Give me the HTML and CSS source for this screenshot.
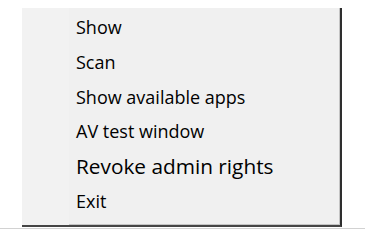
FILE: index.html
```html
<!DOCTYPE html>
<html lang="en">
<head>
  <meta charset="UTF-8" />
  <title>Tray menu</title>
  <link rel="stylesheet" href="styles.css">
</head>
<body>

<div class="menu">
  <div class="gutter"></div>
  <ul class="items">
    <li class="item">Show</li>
    <li class="item">Scan</li>
    <li class="item">Show available apps</li>
    <li class="item">AV test window</li>
    <li class="item big">Revoke admin rights</li>
    <li class="item">Exit</li>
  </ul>
</div>
<div class="rule"></div>

</body>
</html>
```

FILE: styles.css
```css
:root {
  --menu-bg: #f0f0f0;
  --gutter: #f2f2f2;
  --text: #000000;
}

* {
  box-sizing: border-box;
}

body {
  margin: 0;
  background: #ffffff;
  font-family: 'Open Sans', 'Noto Sans', sans-serif;
  width: 365px;
  height: 241px;
  overflow: hidden;
}

.menu {
  display: flex;
  margin: 8px 0 0 22px;
  width: 320px;
  height: 219px;
  background: var(--menu-bg);
  border-right: 2px solid #2e2e2e;
  border-bottom: 2px solid #454545;
  box-shadow: inset -1px -1px 0 #c4c4c4;
}

.gutter {
  width: 47px;
  background: var(--gutter);
}

.items {
  list-style: none;
  margin: 0;
  padding: 2px 0 0 7px;
  flex: 1;
}

.item {
  height: 34.8px;
  line-height: 34.8px;
  font-size: 18px;
  color: var(--text);
  white-space: nowrap;
}

.item.big {
  font-size: 20.8px;
}

.rule {
  height: 1px;
  margin-top: 1px;
  background: #d2d2d2;
}
```
